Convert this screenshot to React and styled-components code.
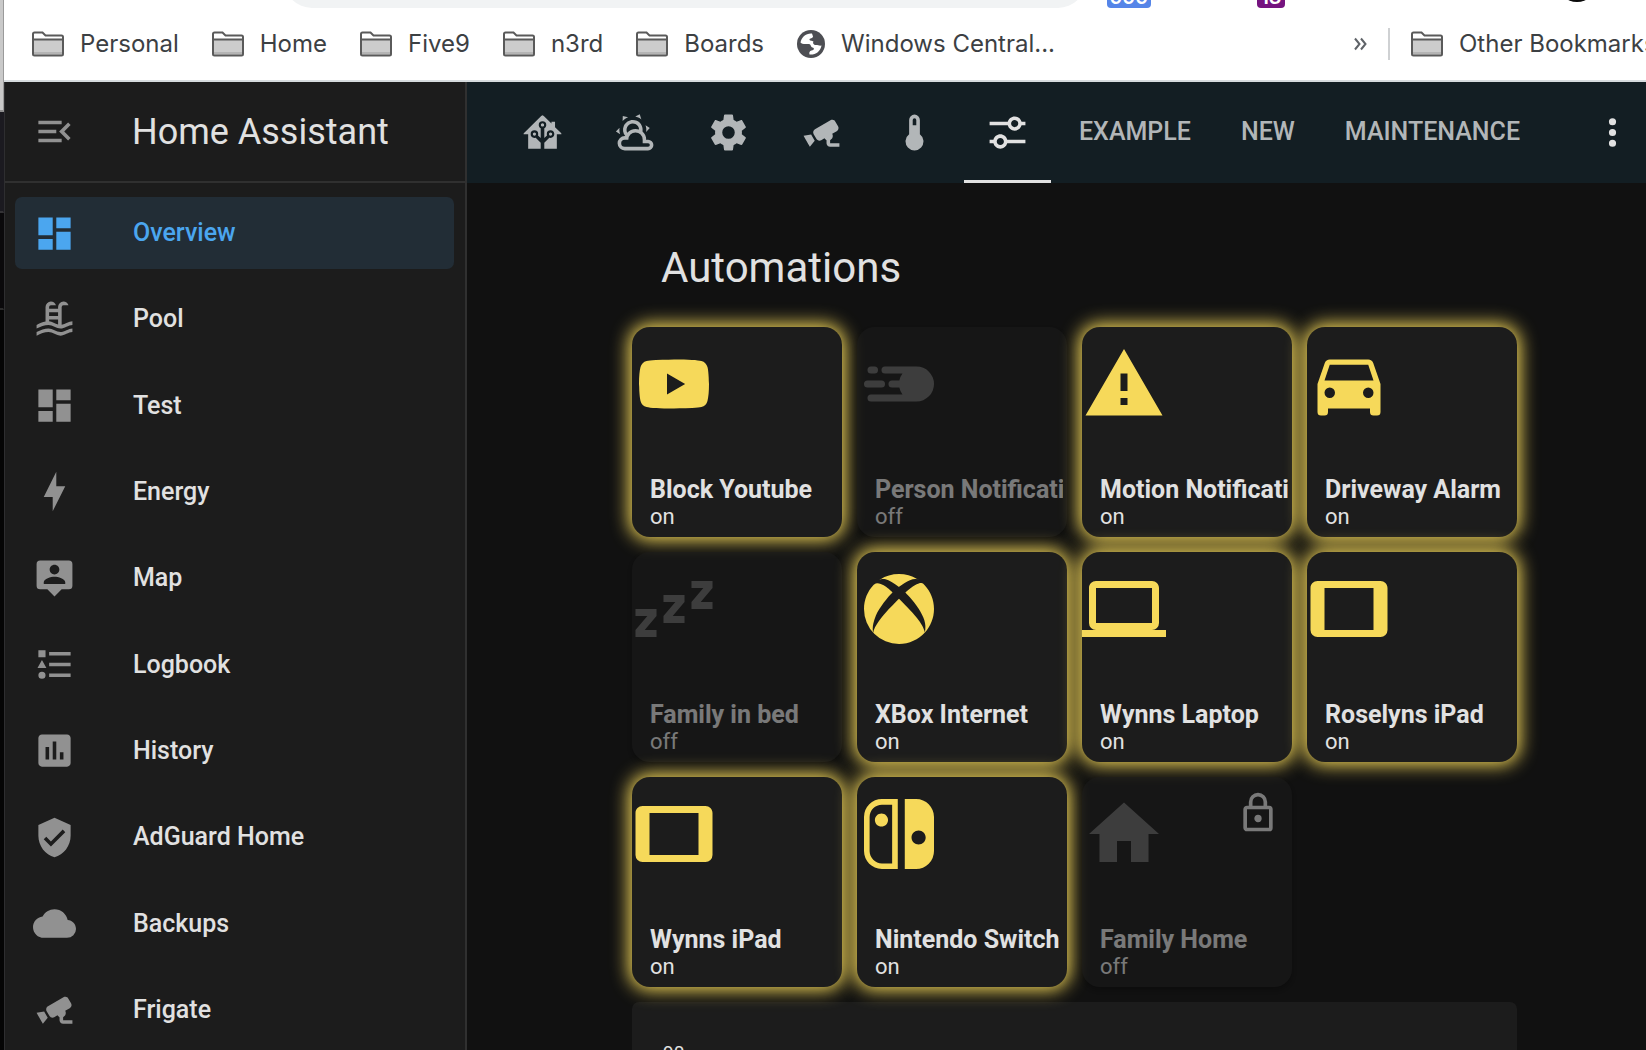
import React from "react";
import styled, { createGlobalStyle } from "styled-components";

const GlobalStyle = createGlobalStyle`
  *, *::before, *::after { box-sizing: border-box; }
  html, body { margin: 0; height: 100%; background: #111111; }
  body { font-family: Roboto, "Noto Sans", sans-serif; overflow: hidden; }
  button { font: inherit; border: 0; margin: 0; padding: 0; background: none; cursor: pointer; }
  a { color: inherit; text-decoration: none; }
`;

const paths = {
  menuOpen:
    "M21,15.61L19.59,17L14.58,12L19.59,7L21,8.39L17.44,12L21,15.61M3,6H16V8H3V6M3,13V11H13V13H3M3,18V16H16V18H3Z",
  dashboard: "M13,3V9H21V3M13,21H21V11H13M3,21H11V15H3M3,13H11V3H3V13Z",
  pool: "M2,15C3.67,14.25 5.33,13.5 7,13.17V5A3,3 0 0,1 10,2C11.31,2 12.42,2.83 12.83,4H10A1,1 0 0,0 9,5V6H14V5A3,3 0 0,1 17,2C18.31,2 19.42,2.83 19.83,4H17A1,1 0 0,0 16,5V14.94C18,14.62 20,13 22,13V15C19.78,15 17.56,17 15.33,17C13.11,17 10.89,15 8.67,15C6.44,15 4.22,16 2,17V15M14,8H9V10H14V8M14,12H9V13C10.67,13.16 12.33,14.31 14,14.79V12M2,19C4.22,18 6.44,17 8.67,17C10.89,17 13.11,19 15.33,19C17.56,19 19.78,17 22,17V19C19.78,19 17.56,21 15.33,21C13.11,21 10.89,19 8.67,19C6.44,19 4.22,20 2,21V19Z",
  bolt: "M11 15H6L13 1V9H18L11 23V15Z",
  map: "M20,2H4A2,2 0 0,0 2,4V16A2,2 0 0,0 4,18H8L12,22L16,18H20A2,2 0 0,0 22,16V4A2,2 0 0,0 20,2M12,4.3C13.5,4.3 14.7,5.5 14.7,7C14.7,8.5 13.5,9.7 12,9.7C10.5,9.7 9.3,8.5 9.3,7C9.3,5.5 10.5,4.3 12,4.3M18,15H6V14.1C6,12.1 10,11 12,11C14,11 18,12.1 18,14.1V15Z",
  list: "M5,9.5L7.5,14H2.5L5,9.5M3,4H7V8H3V4M5,20A2,2 0 0,0 7,18A2,2 0 0,0 5,16A2,2 0 0,0 3,18A2,2 0 0,0 5,20M9,5V7H21V5H9M9,19H21V17H9V19M9,13H21V11H9V13Z",
  chart:
    "M9 17H7V10H9V17M13 17H11V7H13V17M17 17H15V13H17V17M19 3H5C3.89 3 3 3.89 3 5V19C3 20.1 3.9 21 5 21H19C20.1 21 21 20.1 21 19V5C21 3.89 20.1 3 19 3Z",
  shield:
    "M10,17L6,13L7.41,11.59L10,14.17L16.59,7.58L18,9M12,1L3,5V11C3,16.55 6.84,21.74 12,23C17.16,21.74 21,16.55 21,11V5L12,1Z",
  cloud:
    "M19.35,10.04C18.67,6.59 15.64,4 12,4C9.11,4 6.6,5.64 5.35,8.04C2.34,8.36 0,10.91 0,14A6,6 0 0,0 6,20H19A5,5 0 0,0 24,15C24,12.36 21.95,10.22 19.35,10.04Z",
  cctv: "M18.15,4.94C17.77,4.91 17.37,5 17,5.2L8.35,10.2C7.39,10.76 7.07,12 7.62,12.94L9.12,15.53C9.67,16.5 10.89,16.82 11.85,16.27L13.65,15.23C13.92,15.69 14.32,16.06 14.81,16.27V18.04C14.81,19.13 15.7,20 16.81,20H22V18.04H16.81V16.27C17.72,15.87 18.31,14.97 18.31,14C18.31,13.54 18.19,13.11 17.97,12.73L20.5,11.27C21.47,10.71 21.8,9.5 21.24,8.53L19.74,5.94C19.4,5.34 18.79,5 18.15,4.94M6.22,13.17L2,13.87L2.75,15.17L4.75,18.63L5.5,19.93L8.22,16.63L6.22,13.17Z",
  smartHome:
    "M21.8,13H20V21H13V17.67L15.79,14.88L16.5,15C17.66,15 18.6,14.06 18.6,12.9C18.6,11.74 17.66,10.8 16.5,10.8A2.1,2.1 0 0,0 14.4,12.9L14.5,13.61L13,15.13V9.65C13.66,9.29 14.1,8.6 14.1,7.8A2.1,2.1 0 0,0 12,5.7A2.1,2.1 0 0,0 9.9,7.8C9.9,8.6 10.34,9.29 11,9.65V15.13L9.5,13.61L9.6,12.9A2.1,2.1 0 0,0 7.5,10.8A2.1,2.1 0 0,0 5.4,12.9A2.1,2.1 0 0,0 7.5,15L8.21,14.88L11,17.67V21H4V13H2.25C1.83,13 1.42,13 1.42,12.79C1.43,12.57 1.85,12.15 2.28,11.72L11,3C11.33,2.67 11.67,2.33 12,2.33C12.33,2.33 12.67,2.67 13,3L17,7V6H19V9L21.78,11.78C22.18,12.18 22.59,12.59 22.6,12.8C22.6,13 22.2,13 21.8,13M7.5,12A0.9,0.9 0 0,1 8.4,12.9A0.9,0.9 0 0,1 7.5,13.8A0.9,0.9 0 0,1 6.6,12.9A0.9,0.9 0 0,1 7.5,12M16.5,12C17,12 17.4,12.4 17.4,12.9C17.4,13.4 17,13.8 16.5,13.8A0.9,0.9 0 0,1 15.6,12.9A0.9,0.9 0 0,1 16.5,12M12,6.9C12.5,6.9 12.9,7.3 12.9,7.8C12.9,8.3 12.5,8.7 12,8.7C11.5,8.7 11.1,8.3 11.1,7.8C11.1,7.3 11.5,6.9 12,6.9Z",
  weather:
    "M12.74,5.47C15.1,6.5 16.35,9.03 15.92,11.46C17.19,12.56 18,14.19 18,16V16.17C18.31,16.06 18.65,16 19,16A3,3 0 0,1 22,19A3,3 0 0,1 19,22H6A4,4 0 0,1 2,18A4,4 0 0,1 6,14H6.27C5,12.45 4.6,10.24 5.5,8.26C6.72,5.5 9.97,4.24 12.74,5.47M11.93,7.3C10.16,6.5 8.09,7.31 7.31,9.07C6.85,10.09 6.93,11.22 7.41,12.13C8.5,10.83 10.16,10 12,10C12.7,10 13.38,10.12 14,10.34C13.94,9.06 13.18,7.86 11.93,7.3M13.55,3.64C13,3.4 12.45,3.23 11.88,3.12L14.37,1.82L15.27,4.71C14.76,4.29 14.19,3.93 13.55,3.64M6.09,4.44C5.6,4.79 5.17,5.19 4.8,5.63L4.91,2.82L7.87,3.5C7.25,3.71 6.65,4.03 6.09,4.44M18,9.71C17.91,9.12 17.78,8.55 17.59,8L19.97,9.5L17.92,11.73C18.03,11.08 18.05,10.4 18,9.71M3.04,11.3C3.11,11.9 3.24,12.47 3.43,13L1.06,11.5L3.1,9.28C3,9.93 2.97,10.61 3.04,11.3M19,18H16V16A4,4 0 0,0 12,12A4,4 0 0,0 8,16H6A2,2 0 0,0 4,18A2,2 0 0,0 6,20H19A1,1 0 0,0 20,19A1,1 0 0,0 19,18Z",
  cog: "M12,15.5A3.5,3.5 0 0,1 8.5,12A3.5,3.5 0 0,1 12,8.5A3.5,3.5 0 0,1 15.5,12A3.5,3.5 0 0,1 12,15.5M19.43,12.97C19.47,12.65 19.5,12.33 19.5,12C19.5,11.67 19.47,11.34 19.43,11L21.54,9.37C21.73,9.22 21.78,8.95 21.66,8.73L19.66,5.27C19.54,5.05 19.27,4.96 19.05,5.05L16.56,6.05C16.04,5.66 15.5,5.32 14.87,5.07L14.5,2.42C14.46,2.18 14.25,2 14,2H10C9.75,2 9.54,2.18 9.5,2.42L9.13,5.07C8.5,5.32 7.96,5.66 7.44,6.05L4.95,5.05C4.73,4.96 4.46,5.05 4.34,5.27L2.34,8.73C2.21,8.95 2.27,9.22 2.46,9.37L4.57,11C4.53,11.34 4.5,11.67 4.5,12C4.5,12.33 4.53,12.65 4.57,12.97L2.46,14.63C2.27,14.78 2.21,15.05 2.34,15.27L4.34,18.73C4.46,18.95 4.73,19.03 4.95,18.95L7.44,17.94C7.96,18.34 8.5,18.68 9.13,18.93L9.5,21.58C9.54,21.82 9.75,22 10,22H14C14.25,22 14.46,21.82 14.5,21.58L14.87,18.93C15.5,18.67 16.04,18.34 16.56,17.94L19.05,18.95C19.27,19.03 19.54,18.95 19.66,18.73L21.66,15.27C21.78,15.05 21.73,14.78 21.54,14.63L19.43,12.97Z",
  thermometer:
    "M15 13V5A3 3 0 0 0 9 5V13A5 5 0 1 0 15 13M12 4A1 1 0 0 1 13 5V8H11V5A1 1 0 0 1 12 4Z",
  tune: "M8 13C6.14 13 4.59 14.28 4.14 16H2V18H4.14C4.59 19.72 6.14 21 8 21S11.41 19.72 11.86 18H22V16H11.86C11.41 14.28 9.86 13 8 13M8 19C6.9 19 6 18.1 6 17C6 15.9 6.9 15 8 15S10 15.9 10 17C10 18.1 9.1 19 8 19M19.86 6C19.41 4.28 17.86 3 16 3S12.59 4.28 12.14 6H2V8H12.14C12.59 9.72 14.14 11 16 11S19.41 9.72 19.86 8H22V6H19.86M16 9C14.9 9 14 8.1 14 7C14 5.9 14.9 5 16 5S18 5.9 18 7C18 8.1 17.1 9 16 9Z",
  dots: "M12,16A2,2 0 0,1 14,18A2,2 0 0,1 12,20A2,2 0 0,1 10,18A2,2 0 0,1 12,16M12,10A2,2 0 0,1 14,12A2,2 0 0,1 12,14A2,2 0 0,1 10,12A2,2 0 0,1 12,10M12,4A2,2 0 0,1 14,6A2,2 0 0,1 12,8A2,2 0 0,1 10,6A2,2 0 0,1 12,4Z",
  youtube:
    "M10,15L15.19,12L10,9V15M21.56,7.17C21.69,7.64 21.78,8.27 21.84,9.07C21.91,9.87 21.94,10.56 21.94,11.16L22,12C22,14.19 21.84,15.8 21.56,16.83C21.31,17.73 20.73,18.31 19.83,18.56C19.36,18.69 18.5,18.78 17.18,18.84C15.88,18.91 14.69,18.94 13.59,18.94L12,19C7.81,19 5.2,18.84 4.17,18.56C3.27,18.31 2.69,17.73 2.44,16.83C2.31,16.36 2.22,15.73 2.16,14.93C2.09,14.13 2.06,13.44 2.06,12.84L2,12C2,9.81 2.16,8.2 2.44,7.17C2.69,6.27 3.27,5.69 4.17,5.44C4.64,5.31 5.5,5.22 6.82,5.16C8.12,5.09 9.31,5.06 10.41,5.06L12,5C16.19,5 18.8,5.16 19.83,5.44C20.73,5.69 21.31,6.27 21.56,7.17Z",
  motion:
    "M17 7A5 5 0 0 1 17 17H4A1 1 0 0 1 4 15H13A5 5 0 0 1 12.1 13H10A1 1 0 0 1 10 11H12.1A5 5 0 0 1 13 9H8A1 1 0 0 1 8 7ZM4 7H5A1 1 0 0 1 5 9H4A1 1 0 0 1 4 7ZM3 11H7A1 1 0 0 1 7 13H3A1 1 0 0 1 3 11Z",
  alert: "M13 14H11V9H13M13 18H11V16H13M1 21H23L12 2L1 21Z",
  car: "M5,11L6.5,6.5H17.5L19,11M17.5,16A1.5,1.5 0 0,1 16,14.5A1.5,1.5 0 0,1 17.5,13A1.5,1.5 0 0,1 19,14.5A1.5,1.5 0 0,1 17.5,16M6.5,16A1.5,1.5 0 0,1 5,14.5A1.5,1.5 0 0,1 6.5,13A1.5,1.5 0 0,1 8,14.5A1.5,1.5 0 0,1 6.5,16M18.92,6C18.72,5.42 18.16,5 17.5,5H6.5C5.84,5 5.28,5.42 5.08,6L3,12V20A1,1 0 0,0 4,21H5A1,1 0 0,0 6,20V19H18V20A1,1 0 0,0 19,21H20A1,1 0 0,0 21,20V12L18.92,6Z",
  sleep:
    "M23,12H17V10L20.39,6H17V4H23V6L19.62,10H23V12M15,16H9V14L12.39,10H9V8H15V10L11.62,14H15V16M7,20H1V18L4.39,14H1V12H7V14L3.62,18H7V20Z",
  xbox: "M6.43,3.72C6.5,3.66 6.57,3.6 6.62,3.56C8.18,2.55 10,2 12,2C13.88,2 15.64,2.5 17.14,3.42C17.25,3.5 17.54,3.69 17.7,3.88C16.25,2.28 12,5.7 12,5.7C10.5,4.57 9.17,3.8 8.16,3.5C7.31,3.29 6.73,3.5 6.46,3.7M19.34,5.21C19.29,5.16 19.24,5.11 19.2,5.06C18.84,4.66 18.38,4.56 18,4.59C17.61,4.71 15.9,5.32 13.8,7.31C13.8,7.31 16.17,9.61 17.62,11.96C19.07,14.31 19.93,16.16 19.4,18.73C21,16.95 22,14.59 22,12C22,9.38 21,7 19.34,5.21M15.73,12.96C15.08,12.24 14.13,11.21 12.86,9.95C12.59,9.68 12.3,9.4 12,9.1C12,9.1 11.53,9.56 10.93,10.17C10.16,10.94 9.17,11.95 8.61,12.54C7.63,13.59 4.81,16.89 4.65,18.74C4.65,18.74 4,17.28 5.4,13.89C6.3,11.68 9,8.36 10.15,7.28C10.15,7.28 9.12,6.14 7.82,5.35L7.77,5.32C7.14,4.95 6.46,4.66 5.8,4.62C5.13,4.67 4.71,5.16 4.71,5.16C3.03,6.95 2,9.35 2,12A10,10 0 0,0 12,22C14.93,22 17.57,20.74 19.4,18.73C19.4,18.73 19.19,17.4 17.84,15.5C17.53,15.07 16.37,13.69 15.73,12.96Z",
  laptop:
    "M4,6H20V16H4M20,18A2,2 0 0,0 22,16V6C22,4.89 21.1,4 20,4H4C2.89,4 2,4.89 2,6V16A2,2 0 0,0 4,18H0V20H24V18H20Z",
  tablet:
    "M19,18H5V6H19M21,4H3C1.89,4 1,4.89 1,6V18A2,2 0 0,0 3,20H21A2,2 0 0,0 23,18V6C23,4.89 22.1,4 21,4Z",
  nintendo:
    "M10.04,20.4H7.12C6.19,20.4 5.3,20 4.64,19.36C4,18.7 3.6,17.81 3.6,16.88V7.12C3.6,6.19 4,5.3 4.64,4.64C5.3,4 6.19,3.62 7.12,3.62H10.04V20.4M7.12,2A5.12,5.12 0 0,0 2,7.12V16.88C2,19.71 4.29,22 7.12,22H11.65V2H7.12M5.11,8C5.11,9.04 5.95,9.88 7,9.88C8.03,9.88 8.87,9.04 8.87,8C8.87,6.96 8.03,6.12 7,6.12C5.95,6.12 5.11,6.96 5.11,8M17.61,11C18.72,11 19.62,11.89 19.62,13C19.62,14.12 18.72,15 17.61,15C16.5,15 15.58,14.12 15.58,13C15.58,11.89 16.5,11 17.61,11M16.88,22A5.12,5.12 0 0,0 22,16.88V7.12C22,4.29 19.71,2 16.88,2H13.65V22H16.88Z",
  home: "M10,20V14H14V20H19V12H22L12,3L2,12H5V20H10Z",
  lock: "M12,17C10.89,17 10,16.1 10,15C10,13.89 10.89,13 12,13A2,2 0 0,1 14,15A2,2 0 0,1 12,17M18,20V10H6V20H18M18,8A2,2 0 0,1 20,10V20A2,2 0 0,1 18,22H6C4.89,22 4,21.1 4,20V10C4,8.89 4.89,8 6,8H7V6A5,5 0 0,1 12,1A5,5 0 0,1 17,6V8H18M12,3A3,3 0 0,0 9,6V8H15V6A3,3 0 0,0 12,3Z",
};

const Svg = styled.svg`
  display: block;
  flex: none;
  width: ${(p) => p.$size}px;
  height: ${(p) => p.$size}px;
  fill: currentColor;
  fill-rule: evenodd;
`;

function Icon({ name, size = 43 }) {
  return (
    <Svg $size={size} viewBox="0 0 24 24" aria-hidden="true">
      <path d={paths[name]} />
    </Svg>
  );
}

/* ---------- window frame ---------- */

const Screen = styled.div`
  display: flex;
  height: 100vh;
  overflow: hidden;
`;

const Behind = styled.div`
  flex: none;
  display: flex;
  flex-direction: column;
  width: 4px;
  background: #050505;
`;

const BehindPart = styled.div`
  height: ${(p) => p.$height}px;
  background: ${(p) => p.$color};
  border-bottom: 2px solid ${(p) => p.$line};
  border-right: 1px solid ${(p) => p.$edge};
`;

const BrowserWindow = styled.div`
  flex: 1;
  min-width: 0;
  display: flex;
  flex-direction: column;
  overflow: hidden;
`;

const Toolbar = styled.div`
  flex: none;
  display: flex;
  align-items: flex-end;
  height: 8px;
  padding: 0 57px 0 280px;
  background: #ffffff;
  overflow: hidden;
`;

const AddressBar = styled.div`
  flex: 1;
  height: 56px;
  margin-right: 21px;
  border-radius: 28px;
  background: #f1f3f4;
`;

const Badge = styled.span`
  flex: none;
  width: ${(p) => p.$width}px;
  margin-right: ${(p) => p.$gap}px;
  border-radius: 4px;
  background: ${(p) => p.$color};
  color: #ffffff;
  font: 600 20px/22px Inter, sans-serif;
  text-align: center;
`;

const Avatar = styled.span`
  flex: none;
  width: 40px;
  height: 40px;
  margin-right: -8px;
  margin-bottom: 6px;
  border-radius: 50%;
  background: #0a0a0a;
`;

const BookmarkBar = styled.nav`
  flex: none;
  display: flex;
  align-items: center;
  gap: 33px;
  height: 74px;
  padding-left: 28px;
  background: #ffffff;
  border-bottom: 2px solid #d6dbde;
  color: #3c4043;
  font: 400 24px/32px Inter, "Noto Sans", sans-serif;
  white-space: nowrap;
`;

const Bookmark = styled.a`
  flex: none;
  display: flex;
  align-items: center;
  gap: 16px;
`;

const OverflowGroup = styled.div`
  flex: 0 0 292px;
  display: flex;
  align-items: center;
  gap: 21px;
  margin-left: auto;
  overflow: hidden;
`;

const MoreButton = styled.button`
  display: flex;
  color: #5f6368;
`;

const Divider = styled.span`
  flex: none;
  width: 2px;
  height: 32px;
  background: #cfd1d3;
`;

function FolderIcon() {
  return (
    <svg width="32" height="26" viewBox="0 0 32 26" aria-hidden="true">
      <path d="M1 4Q1 1.5 3 1.5H10.5L13.5 4.5H29.500Q31 4.500 31 6V9H1Z" fill="#fff" />
      <path d="M1 8.500H31V23Q31 24.500 29.500 24.500H2.500Q1 24.500 1 23Z" fill="#cccccc" />
      <path d="M2 22H30" stroke="#b4b4b4" strokeWidth="2" />
      <path
        d="M1 3Q1 1.500 2.500 1.500H10.500L13.500 4.500H29.500Q31 4.500 31 6V23Q31 24.500 29.500 24.500H2.500Q1 24.500 1 23ZM1 8.500H31"
        fill="none"
        stroke="#5a5a5a"
        strokeWidth="2"
      />
    </svg>
  );
}

function GlobeIcon() {
  return (
    <svg width="28" height="28" viewBox="0 0 28 28" aria-hidden="true">
      <circle cx="14" cy="14" r="14" fill="#4d4e53" />
      <path
        d="M15 3.500C9 3 4.500 7 3.500 12.500C5 14.500 8 14 12 14C14 14 13.500 17 15.500 17.500C17.500 18 17.500 20 14.500 20.500C12.500 21 12 22.500 12.500 24.500C18.500 25 23.500 21.500 24.500 15.500C22.500 16 21 15 19 15C16.500 15 15.500 13 16.500 11.500C15 10.500 12.500 11 12.500 9.500C12.500 8 16 8.500 16 6.500Z"
        fill="#fff"
      />
    </svg>
  );
}

function ChevronsIcon() {
  return (
    <svg width="13" height="14" viewBox="0 0 13 14" aria-hidden="true">
      <path d="M1 1.500L5.500 7L1 12.500M7 1.500L11.500 7L7 12.500" fill="none" stroke="currentColor" strokeWidth="2" />
    </svg>
  );
}

/* ---------- dashboard ---------- */

const Page = styled.div`
  flex: 1;
  min-height: 0;
  display: flex;
  background: #111111;
  color: #e1e1e1;
`;

const Sidebar = styled.aside`
  flex: 0 0 463px;
  display: flex;
  flex-direction: column;
  background: #1c1c1c;
  border-left: 1px solid #2e2e30;
  border-right: 2px solid #303030;
`;

const SidebarHeader = styled.header`
  flex: none;
  display: flex;
  align-items: center;
  gap: 56px;
  height: 101px;
  padding-left: 28px;
  border-bottom: 2px solid #303030;
`;

const MenuButton = styled.button`
  color: #919191;
`;

const AppTitle = styled.div`
  font-size: 36px;
  line-height: 44px;
`;

const NavList = styled.nav`
  flex: 1;
  display: flex;
  flex-direction: column;
  justify-content: space-between;
  gap: 8px;
  padding: 14px 11px 4px 10px;
`;

const NavItem = styled.a`
  flex: none;
  display: flex;
  align-items: center;
  gap: 57px;
  height: 72px;
  padding-left: 18px;
  border-radius: 7px;
  font-size: 25px;
  font-weight: 500;
  line-height: 32px;
  color: ${(p) => (p.$active ? "#4ba6ef" : "#e1e1e1")};
  background: ${(p) => (p.$active ? "#222d36" : "transparent")};

  svg {
    color: ${(p) => (p.$active ? "#4ba6ef" : "#919191")};
  }
`;

const Content = styled.div`
  flex: 1;
  min-width: 0;
  display: flex;
  flex-direction: column;
`;

const TabBar = styled.header`
  flex: none;
  display: flex;
  align-items: center;
  justify-content: space-between;
  height: 101px;
  padding: 0 12px 0 32px;
  background: #131e23;
`;

const Tabs = styled.div`
  display: flex;
  gap: 6px;
  height: 100%;
`;

const Tab = styled.button`
  display: flex;
  align-items: center;
  padding: 2px 22px 0;
  border-bottom: 3px solid ${(p) => (p.$active ? "#e1e1e1" : "transparent")};
  color: ${(p) => (p.$active ? "#e1e1e1" : "#b2b6b8")};
  font-size: 25px;
  font-weight: 500;
  line-height: 32px;
`;

const OptionsButton = styled.button`
  color: #e1e1e1;
`;

const View = styled.main`
  flex: 1;
  min-height: 0;
  padding: 60px 0 0 36px;
  overflow: hidden;
`;

const Column = styled.section`
  width: 100%;
  max-width: 885px;
  margin: 0 auto;
`;

const Heading = styled.h1`
  margin: 0 0 34px;
  padding-left: 29px;
  font-size: 42px;
  font-weight: 400;
  line-height: 50px;
`;

const CardGrid = styled.div`
  display: grid;
  grid-template-columns: repeat(4, 1fr);
  gap: 15px;
`;

const Card = styled.button`
  position: relative;
  display: flex;
  flex-direction: column;
  align-items: stretch;
  min-width: 0;
  aspect-ratio: 1;
  padding: 15px 0 7px;
  border-radius: 18px;
  background: #1c1c1c;
  color: #e1e1e1;
  text-align: left;
  opacity: ${(p) => (p.$on ? 1 : 0.5)};
  box-shadow: ${(p) =>
    p.$on ? "0 0 18px 3px #f6d95a" : "0 3px 4px rgba(0, 0, 0, 0.4)"};
`;

const CardIcon = styled.span`
  flex: 1;
  color: ${(p) => (p.$on ? "#f6d95a" : "#6a6a6a")};
`;

const CardName = styled.span`
  padding-left: 18px;
  margin-right: 4px;
  overflow: hidden;
  white-space: nowrap;
  font-size: 25px;
  font-weight: 700;
  line-height: 28px;
`;

const CardState = styled.span`
  padding-left: 18px;
  font-size: 22px;
  line-height: 26px;
`;

const LockMark = styled.span`
  position: absolute;
  top: 14px;
  right: 12px;
`;

const HistoryCard = styled.div`
  min-height: 240px;
  margin-top: 15px;
  padding: 39px 31px;
  border-radius: 7px;
  background: #1c1c1c;
  color: #e1e1e1;
  font-size: 19px;
  line-height: 24px;
`;

const bookmarks = ["Personal", "Home", "Five9", "n3rd", "Boards"];

const navItems = [
  ["Overview", "dashboard"],
  ["Pool", "pool"],
  ["Test", "dashboard"],
  ["Energy", "bolt"],
  ["Map", "map"],
  ["Logbook", "list"],
  ["History", "chart"],
  ["AdGuard Home", "shield"],
  ["Backups", "cloud"],
  ["Frigate", "cctv"],
];

const iconTabs = [
  ["Home", "smartHome"],
  ["Weather", "weather"],
  ["Settings", "cog"],
  ["Cameras", "cctv"],
  ["Climate", "thermometer"],
  ["Automations", "tune"],
];

const textTabs = ["EXAMPLE", "NEW", "MAINTENANCE"];

const cards = [
  { name: "Block Youtube", icon: "youtube", on: true },
  { name: "Person Notifications", icon: "motion", on: false },
  { name: "Motion Notifications", icon: "alert", on: true },
  { name: "Driveway Alarm", icon: "car", on: true },
  { name: "Family in bed", icon: "sleep", on: false },
  { name: "XBox Internet", icon: "xbox", on: true },
  { name: "Wynns Laptop", icon: "laptop", on: true },
  { name: "Roselyns iPad", icon: "tablet", on: true },
  { name: "Wynns iPad", icon: "tablet", on: true },
  { name: "Nintendo Switch", icon: "nintendo", on: true },
  { name: "Family Home", icon: "home", on: false, locked: true },
];

export default function App() {
  return (
    <>
      <GlobalStyle />
      <Screen>
        <Behind>
          <BehindPart $height={112} $color="#c9c9c9" $line="#8e8e8e" $edge="#9a9a9a" />
          <BehindPart $height={101} $color="#1b1a20" $line="#343336" $edge="#1b1a20" />
          <BehindPart $height={97} $color="#0a090b" $line="#2c2c2c" $edge="#0a090b" />
        </Behind>
        <BrowserWindow>
          <Toolbar>
            <AddressBar />
            <Badge $width={44} $gap={106} $color="#5585e8">999</Badge>
            <Badge $width={28} $gap={272} $color="#75137f">13</Badge>
            <Avatar />
          </Toolbar>
          <BookmarkBar aria-label="Bookmarks">
            {bookmarks.map((name) => (
              <Bookmark href="#" key={name}>
                <FolderIcon />
                {name}
              </Bookmark>
            ))}
            <Bookmark href="#">
              <GlobeIcon />
              Windows Central...
            </Bookmark>
            <OverflowGroup>
              <MoreButton aria-label="More bookmarks">
                <ChevronsIcon />
              </MoreButton>
              <Divider />
              <Bookmark href="#">
                <FolderIcon />
                Other Bookmarks
              </Bookmark>
            </OverflowGroup>
          </BookmarkBar>
          <Page>
            <Sidebar>
              <SidebarHeader>
                <MenuButton aria-label="Collapse sidebar">
                  <Icon name="menuOpen" />
                </MenuButton>
                <AppTitle>Home Assistant</AppTitle>
              </SidebarHeader>
              <NavList aria-label="Sidebar">
                {navItems.map(([label, icon], i) => (
                  <NavItem href="#" key={label} $active={i === 0}>
                    <Icon name={icon} />
                    {label}
                  </NavItem>
                ))}
              </NavList>
            </Sidebar>
            <Content>
              <TabBar>
                <Tabs role="tablist">
                  {iconTabs.map(([label, icon]) => (
                    <Tab
                      key={label}
                      role="tab"
                      aria-label={label}
                      aria-selected={icon === "tune"}
                      $active={icon === "tune"}
                    >
                      <Icon name={icon} />
                    </Tab>
                  ))}
                  {textTabs.map((label) => (
                    <Tab key={label} role="tab" aria-selected={false}>
                      {label}
                    </Tab>
                  ))}
                </Tabs>
                <OptionsButton aria-label="Options">
                  <Icon name="dots" />
                </OptionsButton>
              </TabBar>
              <View>
                <Column>
                  <Heading>Automations</Heading>
                  <CardGrid>
                    {cards.map(({ name, icon, on, locked }) => (
                      <Card key={name} $on={on} aria-pressed={on}>
                        <CardIcon $on={on}>
                          <Icon name={icon} size={84} />
                        </CardIcon>
                        <CardName>{name}</CardName>
                        <CardState>{on ? "on" : "off"}</CardState>
                        {locked && (
                          <LockMark>
                            <Icon name="lock" size={44} />
                          </LockMark>
                        )}
                      </Card>
                    ))}
                  </CardGrid>
                  <HistoryCard>90</HistoryCard>
                </Column>
              </View>
            </Content>
          </Page>
        </BrowserWindow>
      </Screen>
    </>
  );
}
